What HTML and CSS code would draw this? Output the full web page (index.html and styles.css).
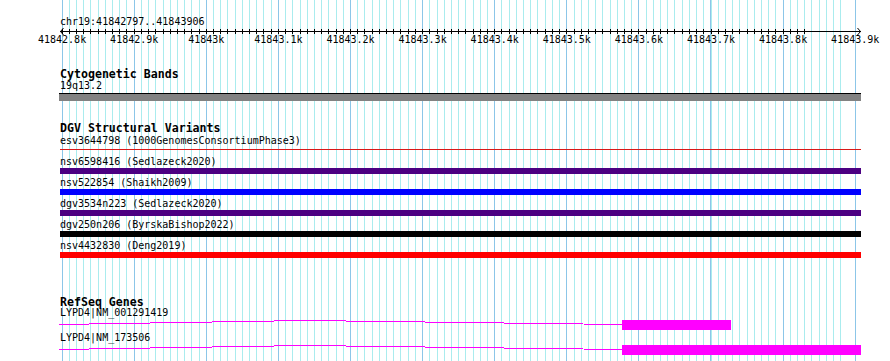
FILE: index.html
```html
<!DOCTYPE html>
<html>
<head>
<meta charset="utf-8">
<title>chr19:41842797..41843906</title>
<link rel="stylesheet" href="styles.css">
</head>
<body>
<div class="panel">
  <svg class="grid" width="890" height="361" shape-rendering="crispEdges" aria-hidden="true">
    <path class="minor" d="M62.1 0V361m7.21-361v361m7.21-361v361m7.21-361v361m7.21-361v361m7.21-361v361m7.21-361v361m7.21-361v361m7.21-361v361m7.21-361v361m7.21-361v361m7.21-361v361m7.21-361v361m7.21-361v361m7.21-361v361m7.21-361v361m7.21-361v361m7.21-361v361m7.21-361v361m7.21-361v361m7.21-361v361m7.21-361v361m7.21-361v361m7.21-361v361m7.21-361v361m7.21-361v361m7.21-361v361m7.21-361v361m7.21-361v361m7.21-361v361m7.21-361v361m7.21-361v361m7.21-361v361m7.21-361v361m7.21-361v361m7.21-361v361m7.21-361v361m7.21-361v361m7.21-361v361m7.21-361v361m7.21-361v361m7.21-361v361m7.21-361v361m7.21-361v361m7.21-361v361m7.21-361v361m7.21-361v361m7.21-361v361m7.21-361v361m7.21-361v361m7.21-361v361m7.21-361v361m7.21-361v361m7.21-361v361m7.21-361v361m7.21-361v361m7.21-361v361m7.21-361v361m7.21-361v361m7.21-361v361m7.21-361v361m7.21-361v361m7.21-361v361m7.21-361v361m7.21-361v361m7.21-361v361m7.21-361v361m7.21-361v361m7.21-361v361m7.21-361v361m7.21-361v361m7.21-361v361m7.21-361v361m7.21-361v361m7.21-361v361m7.21-361v361m7.21-361v361m7.21-361v361m7.21-361v361m7.21-361v361m7.21-361v361m7.21-361v361m7.21-361v361m7.21-361v361m7.21-361v361m7.21-361v361m7.21-361v361m7.21-361v361m7.21-361v361m7.21-361v361m7.21-361v361m7.21-361v361m7.21-361v361m7.21-361v361m7.21-361v361m7.21-361v361m7.21-361v361m7.21-361v361m7.21-361v361m7.21-361v361m7.21-361v361m7.21-361v361m7.21-361v361m7.21-361v361m7.21-361v361m7.21-361v361m7.21-361v361m7.21-361v361m7.21-361v361"/>
    <path class="major" d="M62.1 0V361m72.1-361v361m72.1-361v361m72.1-361v361m72.1-361v361m72.1-361v361m72.1-361v361m72.1-361v361m72.1-361v361m72.1-361v361m72.1-361v361m72.1-361v361"/>
  </svg>

  <div class="content">
    <svg class="ruler" width="890" height="48">
      <text class="rtext" x="60" y="25">chr19:41842797..41843906</text>
      <path class="rline" shape-rendering="crispEdges" d="M60 31.5H861"/>
      <path class="rline" d="M63.5 28L60.5 31.5L63.5 35M857.5 28L860.5 31.5L857.5 35"/>
      <path class="rline" shape-rendering="crispEdges" d="M62.1 29v5m7.21-5v5m7.21-5v5m7.21-5v5m7.21-5v5m7.21-5v5m7.21-5v5m7.21-5v5m7.21-5v5m7.21-5v5m7.21-5v5m7.21-5v5m7.21-5v5m7.21-5v5m7.21-5v5m7.21-5v5m7.21-5v5m7.21-5v5m7.21-5v5m7.21-5v5m7.21-5v5m7.21-5v5m7.21-5v5m7.21-5v5m7.21-5v5m7.21-5v5m7.21-5v5m7.21-5v5m7.21-5v5m7.21-5v5m7.21-5v5m7.21-5v5m7.21-5v5m7.21-5v5m7.21-5v5m7.21-5v5m7.21-5v5m7.21-5v5m7.21-5v5m7.21-5v5m7.21-5v5m7.21-5v5m7.21-5v5m7.21-5v5m7.21-5v5m7.21-5v5m7.21-5v5m7.21-5v5m7.21-5v5m7.21-5v5m7.21-5v5m7.21-5v5m7.21-5v5m7.21-5v5m7.21-5v5m7.21-5v5m7.21-5v5m7.21-5v5m7.21-5v5m7.21-5v5m7.21-5v5m7.21-5v5m7.21-5v5m7.21-5v5m7.21-5v5m7.21-5v5m7.21-5v5m7.21-5v5m7.21-5v5m7.21-5v5m7.21-5v5m7.21-5v5m7.21-5v5m7.21-5v5m7.21-5v5m7.21-5v5m7.21-5v5m7.21-5v5m7.21-5v5m7.21-5v5m7.21-5v5m7.21-5v5m7.21-5v5m7.21-5v5m7.21-5v5m7.21-5v5m7.21-5v5m7.21-5v5m7.21-5v5m7.21-5v5m7.21-5v5m7.21-5v5m7.21-5v5m7.21-5v5m7.21-5v5m7.21-5v5m7.21-5v5m7.21-5v5m7.21-5v5m7.21-5v5m7.21-5v5m7.21-5v5m7.21-5v5m7.21-5v5"/>
      <g class="rtext" text-anchor="middle">
        <text x="62.1" y="43">41842.8k</text>
        <text x="134.2" y="43">41842.9k</text>
        <text x="206.3" y="43">41843k</text>
        <text x="278.4" y="43">41843.1k</text>
        <text x="350.5" y="43">41843.2k</text>
        <text x="422.6" y="43">41843.3k</text>
        <text x="494.7" y="43">41843.4k</text>
        <text x="566.8" y="43">41843.5k</text>
        <text x="638.9" y="43">41843.6k</text>
        <text x="711" y="43">41843.7k</text>
        <text x="783.1" y="43">41843.8k</text>
        <text x="855.2" y="43">41843.9k</text>
      </g>
    </svg>

    <section class="track cyto">
      <h2 class="title">Cytogenetic Bands</h2>
      <div class="lbl">19q13.2</div>
      <div class="band"></div>
    </section>

    <section class="track dgv">
      <h2 class="title">DGV Structural Variants</h2>
      <div class="rows">
        <div class="feat">
          <div class="lbl">esv3644798 (1000GenomesConsortiumPhase3)</div>
          <div class="bar thin"></div>
        </div>
        <div class="feat">
          <div class="lbl">nsv6598416 (Sedlazeck2020)</div>
          <div class="bar purple"></div>
        </div>
        <div class="feat">
          <div class="lbl">nsv522854 (Shaikh2009)</div>
          <div class="bar blue"></div>
        </div>
        <div class="feat">
          <div class="lbl">dgv3534n223 (Sedlazeck2020)</div>
          <div class="bar purple"></div>
        </div>
        <div class="feat">
          <div class="lbl">dgv250n206 (ByrskaBishop2022)</div>
          <div class="bar black"></div>
        </div>
        <div class="feat">
          <div class="lbl">nsv4432830 (Deng2019)</div>
          <div class="bar red"></div>
        </div>
      </div>
    </section>

    <section class="track refseq">
      <h2 class="title">RefSeq Genes</h2>
      <div class="gene">
        <div class="lbl">LYPD4|NM_001291419</div>
        <svg class="glyph" width="802" height="13">
          <polyline class="intron" shape-rendering="crispEdges" points="0,5.5 246,1.5 563,5.5"/>
          <rect class="exon" x="563" y="1" width="109" height="10"/>
        </svg>
      </div>
      <div class="gene">
        <div class="lbl">LYPD4|NM_173506</div>
        <svg class="glyph" width="802" height="13">
          <polyline class="intron" shape-rendering="crispEdges" points="0,5.5 246,1.5 563,5.5"/>
          <rect class="exon" x="563" y="1" width="239" height="10"/>
        </svg>
      </div>
    </section>
  </div>
</div>
</body>
</html>
```

FILE: styles.css
```css
* { box-sizing: border-box; }

html, body {
  margin: 0;
  padding: 0;
  background: #ffffff;
}

.panel {
  position: relative;
  width: 890px;
  height: 361px;
  overflow: hidden;
  background: #ffffff;
}

.grid {
  position: absolute;
  left: 0;
  top: 0;
}

.grid .minor {
  stroke: #aaecee;
  stroke-width: 1;
  fill: none;
}

.grid .major {
  stroke: #8cc6e8;
  stroke-width: 1;
  fill: none;
}

.content {
  position: relative;
  display: flex;
  flex-direction: column;
}

.ruler {
  display: block;
}

.rtext {
  font-family: "DejaVu Sans Mono", monospace;
  font-size: 10px;
  fill: #000;
}

.rline {
  stroke: #000;
  stroke-width: 1;
  fill: none;
}

.track {
  display: flex;
  flex-direction: column;
  padding-left: 60px;
  width: 862px;
}

.title {
  margin: 0;
  padding-top: 1px;
  font-family: "DejaVu Sans Mono", monospace;
  font-weight: bold;
  font-size: 11.6px;
  line-height: 12px;
  height: 12px;
  color: #000;
  white-space: pre;
}

.lbl {
  font-family: "DejaVu Sans Mono", monospace;
  font-size: 10px;
  line-height: 12px;
  height: 12px;
  color: #000;
  white-space: pre;
}

.cyto { margin-top: 19px; }
.cyto .lbl { margin-top: 1px; }

.band {
  margin-top: 1px;
  width: 802px;
  height: 8px;
  margin-left: -1px;
  background: #828282;
  border-top: 1px solid #000;
}

.dgv { margin-top: 20px; }

.rows {
  margin-top: 2px;
  display: flex;
  flex-direction: column;
}

.feat {
  height: 21px;
  display: flex;
  flex-direction: column;
}

.bar {
  width: 801px;
  height: 6px;
}

.bar.thin {
  height: 1px;
  margin-top: 2px;
  background: #d81818;
}

.bar.purple { background: #4b0082; }
.bar.blue { background: #0000ff; }
.bar.black { background: #000000; }
.bar.red { background: #ff0000; }

.refseq { margin-top: 34px; }

.gene {
  height: 25px;
  display: flex;
  flex-direction: column;
}

.glyph {
  display: block;
  margin-left: -1px;
}

.intron {
  stroke: #ff00ff;
  stroke-width: 1;
  fill: none;
}

.exon {
  fill: #ff00ff;
}
```
